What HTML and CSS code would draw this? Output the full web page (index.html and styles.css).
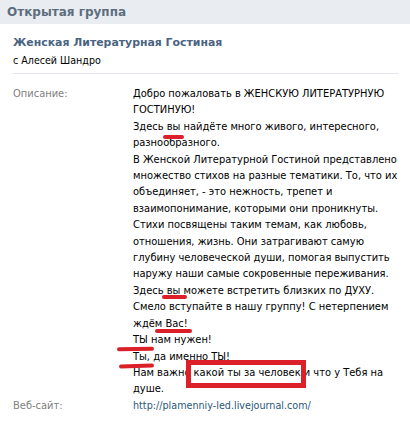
FILE: index.html
```html
<!DOCTYPE html>
<html lang="ru">
<head>
<meta charset="utf-8">
<title>Открытая группа</title>
<link rel="stylesheet" href="styles.css">
</head>
<body>
<div class="page">
  <div class="bar">Открытая группа</div>
  <div class="group">
    <div class="title">Женская Литературная Гостиная</div>
    <div class="sub">с Алесей Шандро</div>
  </div>
  <div class="info">
    <div class="label">Описание:</div>
    <div class="value desc">Добро пожаловать в ЖЕНСКУЮ ЛИТЕРАТУРНУЮ<br>ГОСТИНУЮ!<br>Здесь вы найдёте много живого, интересного,<br>разнообразного.<br>В Женской Литературной Гостиной представлено<br>множество стихов на разные тематики. То, что их<br>объединяет, - это нежность, трепет и<br>взаимопонимание, которыми они проникнуты.<br>Стихи посвящены таким темам, как любовь,<br>отношения, жизнь. Они затрагивают самую<br>глубину человеческой души, помогая выпустить<br>наружу наши самые сокровенные переживания.<br>Здесь вы можете встретить близких по ДУХУ.<br>Смело вступайте в нашу группу! С нетерпением<br>ждём Вас!<br>ТЫ нам нужен!<br>Ты, да именно ТЫ!<br>Нам важно какой ты за человек и что у Тебя на<br>душе.
      <span class="mark m1"></span>
      <span class="mark m2"></span>
      <span class="mark m3"></span>
      <span class="mark m4"></span>
      <span class="mark m5"></span>
      <span class="box"></span>
    </div>
    <div class="label">Веб-сайт:</div>
    <div class="value"><a class="link" href="#">http://plamenniy-led.livejournal.com/</a></div>
  </div>
</div>
</body>
</html>
```
FILE: styles.css
```css
html, body {
  margin: 0;
  padding: 0;
  background: #ffffff;
}
body {
  font-family: "DejaVu Sans Condensed", "DejaVu Sans", sans-serif;
  font-size: 11px;
  color: #000000;
}
.page {
  width: 410px;
}
.bar {
  height: 24px;
  line-height: 24px;
  background: #e9edf1;
  color: #5d6d7e;
  font-family: "DejaVu Sans", sans-serif;
  font-size: 12px;
  font-weight: bold;
  padding-left: 7px;
}
.group {
  margin: 0 12px 0 13px;
  padding-top: 10px;
  padding-bottom: 5px;
  border-bottom: 1px solid #e3e7eb;
}
.title {
  font-family: "DejaVu Sans", sans-serif;
  font-size: 10.9px;
  font-weight: bold;
  color: #4a6482;
  line-height: 18px;
}
.sub {
  font-size: 10.6px;
  line-height: 16px;
}
.info {
  display: grid;
  grid-template-columns: 120px 1fr;
  padding: 12px 0 0 13px;
  line-height: 16.4px;
  white-space: nowrap;
}
.label {
  color: #808080;
}
.desc {
  position: relative;
}
.link {
  color: #2b587a;
  text-decoration: none;
  font-size: 10.7px;
}
.mark {
  position: absolute;
  height: 3.5px;
  border-radius: 2px;
  background: #dc2029;
}
.m1 { left: 30px; top: 49px; width: 21px; }
.m2 { left: 29px; top: 209px; width: 25px; }
.m3 { left: 22px; top: 243px; width: 37px; }
.m4 { left: -16px; top: 261px; width: 37px; transform: rotate(-1deg); }
.m5 { left: -14px; top: 278px; width: 35px; transform: rotate(-2deg); }
.box {
  position: absolute;
  left: 53px;
  top: 274px;
  width: 120px;
  height: 28px;
  box-sizing: border-box;
  border: 5px solid #dc2029;
}
```
